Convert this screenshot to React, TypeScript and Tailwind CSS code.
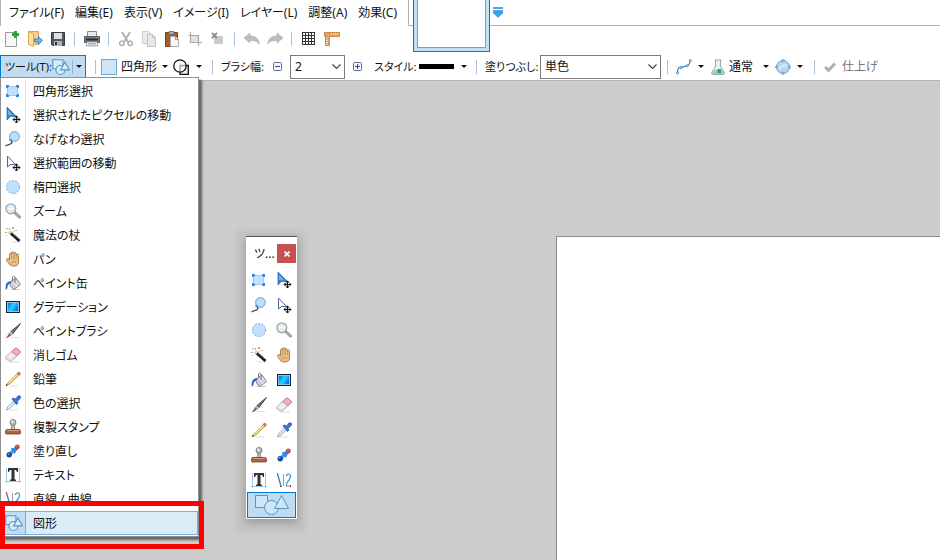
import type { ReactNode } from 'react'

type IconProps = { className?: string }

function Svg({ children, className = 'size-4' }: IconProps & { children: ReactNode }) {
  return (
    <svg viewBox="0 0 16 16" fill="none" className={`block shrink-0 ${className}`} aria-hidden="true">
      {children}
    </svg>
  )
}

/* ---------- tool icons ---------- */

function RectSelectIcon() {
  return (
    <Svg>
      <rect x="2.500" y="3.500" width="10" height="9" fill="#bfe0ff" stroke="#6c9cc6" strokeDasharray="1 1" />
      <path d="M1 2h3v2H3v1H1zM14 2h-3v2h1v1h2zM1 14h3v-2H3v-1H1zM14 14h-3v-2h1v-1h2z" fill="#2f86ee" />
    </Svg>
  )
}

function MovePixelsIcon() {
  return (
    <Svg>
      <path d="M2 0V13L5.500 9.500H11.500Z" fill="#3f7fc4" stroke="#2c62a4" strokeWidth="0.700" />
      <path d="M3 2.500V8L8 8.500Z" fill="#74abe2" />
      <MoveCross />
    </Svg>
  )
}

function MoveSelectionIcon() {
  return (
    <Svg>
      <path d="M2.500 1V12L5.500 9.500H10.500Z" fill="#fff" stroke="#51689b" />
      <MoveCross />
    </Svg>
  )
}

function MoveCross() {
  return (
    <>
      <path d="M11.500 9v7M8 12.500h7" stroke="#111" strokeWidth="1.200" />
      <path d="M11.500 8.500l2 2h-4zM11.500 16.500l2-2h-4zM7.500 12.500l2-2v4zM15.500 12.500l-2-2v4z" fill="#111" />
    </>
  )
}

function LassoIcon() {
  return (
    <Svg>
      <circle cx="9.500" cy="5.500" r="4.900" fill="#bcdfff" stroke="#719fcb" />
      <path d="M5.500 9.500c2 1 2 2.500 0 3.500-1.500.8-3 .7-5 2" stroke="#30455c" strokeWidth="1.300" />
      <circle cx="5.500" cy="9" r="1.300" fill="#5b8ec5" />
    </Svg>
  )
}

function EllipseSelectIcon() {
  return (
    <Svg>
      <circle cx="8" cy="8" r="6.500" fill="#bfe0ff" stroke="#6ea6da" strokeDasharray="2 1.200" />
    </Svg>
  )
}

function ZoomIcon() {
  return (
    <Svg>
      <path d="M9.500 9.500l5 4.500" stroke="#8c8c8c" strokeWidth="3" strokeLinecap="round" />
      <path d="M10.500 10.500l4 3.500" stroke="#d3d3d3" strokeLinecap="round" />
      <circle cx="5.800" cy="5.800" r="4.900" fill="#dcebf4" stroke="#a9a9a9" strokeWidth="1.400" />
      <path d="M3 5.500h6" stroke="#fff" strokeWidth="2" />
    </Svg>
  )
}

function WandIcon() {
  return (
    <Svg>
      <path d="M6 15h9" stroke="#ddd" />
      <path d="M4.500 5l10 9" stroke="#1a1a1a" strokeWidth="3" />
      <path d="M4 4.500L6 6.300" stroke="#ddd" strokeWidth="2.500" />
      <path d="M7 6l7 6" stroke="#777" strokeWidth="0.800" />
      <path d="M1 1h2v1H1zM7 0h2v2H7zM10 3h2v1h-2zM0 5h2v1H0zM4 1h1v2H4zM8 4h1v1H8zM1 8h1v1H1z" fill="#c9ad4e" />
    </Svg>
  )
}

function HandIcon() {
  return (
    <Svg>
      <path
        d="M4.500 9V3.500Q4.500 2 5.500 2T6.500 3V2Q6.500 .8 7.700 .8T9 2v1Q9 1.500 10 1.500T11.300 3v1.500Q11.500 3 12.500 3T13.500 4.500V11q0 4-4.500 4H7.500q-2.500 0-4-3L1.500 9.500Q1 8 2.500 7.500T4.500 9Z"
        fill="#e9bd88"
        stroke="#b57e45"
      />
      <path d="M6.600 3v5M9 3v5M11.300 4v4M6 12q2-2 5-1" stroke="#c08b54" strokeWidth="0.800" />
    </Svg>
  )
}

function BucketIcon() {
  return (
    <Svg>
      <path d="M6 14.500h9" stroke="#ccc" />
      <path d="M4.500 7.500L11 3l4.500 6.500L9 14.500Q5 12.500 4.500 7.500Z" fill="#cfcfd4" stroke="#85858c" />
      <path d="M8 7l4.500 5M10.500 5l3.500 4.500" stroke="#f5f5f5" />
      <path d="M7.500 6V2q1-2 2.500 0v6" stroke="#777" />
      <path d="M6.500 6Q1.500 6.500 1 9.500T.5 14.500q2 0 2-2.500T6 8Z" fill="#2769c8" />
    </Svg>
  )
}

function GradientIcon() {
  return (
    <Svg>
      <defs>
        <linearGradient id="sea" x1="0" y1="0" x2="1" y2="0.500">
          <stop offset="0" stopColor="#0759df" />
          <stop offset="0.550" stopColor="#24d6ff" />
          <stop offset="1" stopColor="#0773ef" />
        </linearGradient>
      </defs>
      <rect x="1" y="2" width="14" height="12" fill="#10213f" />
      <rect x="2.500" y="3.500" width="11" height="9" fill="url(#sea)" stroke="#8fc4ee" />
    </Svg>
  )
}

function BrushIcon() {
  return (
    <Svg>
      <path d="M6 14.500h8" stroke="#ddd" />
      <path d="M15.500 .5L6 8.500l2 2Z" fill="#777" stroke="#444" />
      <path d="M6 8.500l2 2-2 2-2-2z" fill="#b8b8b8" stroke="#777" strokeWidth="0.600" />
      <path d="M4 10.500l2 1.800Q4 15 .5 15.500 2.500 13 4 10.500Z" fill="#97623a" />
    </Svg>
  )
}

function EraserIcon() {
  return (
    <Svg>
      <path d="M5 15h9" stroke="#ddd" />
      <path d="M1 9.500L10 1.500q1-.8 2 0l3 2.500q1 1 0 2L6.500 14q-1 1-2 .3L1 12q-1-1 0-2.500Z" fill="#f0f0f0" stroke="#b4b4b4" />
      <path d="M6.500 4.700L10 1.500q1-.8 2 0l3 2.500q1 1 0 2l-3 2.800Z" fill="#f4aeb8" stroke="#d48391" />
      <path d="M1.500 10l4 3.500L11 9" stroke="#c9c9c9" />
    </Svg>
  )
}

function PencilIcon() {
  return (
    <Svg>
      <path d="M5 15h8" stroke="#ddd" />
      <path d="M3 11.800L12.300 2.500l1.700 1.700-9.500 9-3.500 1.300Z" fill="#f6d566" stroke="#ad8b35" strokeWidth="0.800" />
      <path d="M4 11.500l8.500-8" stroke="#fff0a5" />
      <path d="M12 2.500L13.500 1q1.500 0 2 2L14 4.500z" fill="#e0717b" stroke="#b9525c" strokeWidth="0.600" />
      <path d="M.8 15l.8-2 1.200 1.200z" fill="#333" />
    </Svg>
  )
}

function PickerIcon() {
  return (
    <Svg>
      <path d="M4 15h9" stroke="#ddd" />
      <path d="M9 5.500l2 2-6.500 6-3 1.500 1-3Z" fill="#e4edf7" stroke="#8296ae" strokeWidth="0.800" />
      <path d="M7 4l1.500-1 2 1L13 1q1.500-.8 2.300.3T14.800 4L12 6.500l1 1.500-1.500 1.500z" fill="#3d73d7" stroke="#2449a1" strokeWidth="0.700" />
    </Svg>
  )
}

function StampIcon() {
  return (
    <Svg>
      <path d="M7 6h2l1 5H6z" fill="#bbb" stroke="#777" strokeWidth="0.700" />
      <circle cx="8" cy="3.500" r="3" fill="#b8b8b8" stroke="#808080" />
      <circle cx="7.300" cy="2.800" r="1.200" fill="#eee" />
      <path d="M2 10.500h12q1.500 0 1.500 2V14q0 1-1 1h-13q-1 0-1-1v-1.500q0-2 1.500-2Z" fill="#a8653e" stroke="#7b3f20" strokeWidth="0.800" />
      <path d="M2 11.500h12" stroke="#d59a75" />
    </Svg>
  )
}

function RecolorIcon() {
  return (
    <Svg>
      <path d="M5 11l6-6" stroke="#4da1ec" strokeWidth="3.500" />
      <circle cx="12.300" cy="4" r="2.400" fill="#b8423e" />
      <circle cx="4.200" cy="11.700" r="2.700" fill="#1746a6" />
      <path d="M6 5l1 3 3 3 1-3 2-1-3-2z" fill="#2c8be2" />
      <circle cx="3.500" cy="11" r="1" fill="#6b94e5" />
      <circle cx="12" cy="3.300" r=".8" fill="#f09a94" />
    </Svg>
  )
}

function TextIcon() {
  return (
    <Svg>
      <path d="M1.500 1v15M14.500 1v15M0 14.500h16" stroke="#a3c5ee" />
      <path d="M3 1h10v4h-1l-1-2H9.500v9l1.500 1v1H5v-1l1.500-1V3H5L4 5H3z" fill="#333" />
    </Svg>
  )
}

function LineIcon() {
  return (
    <Svg>
      <path d="M1.500 2l3.500 12" stroke="#2d83c9" strokeWidth="1.300" />
      <path d="M7.500 2v12" stroke="#999" />
      <path d="M10.500 4Q11 1.500 13 2t1.500 3q-.5 2-3 5-1.500 2-1 4h4.500" stroke="#4298d5" strokeWidth="1.200" />
      <path d="M1 1h1v1H1zM4 14h2v1H4zM10 3h1v1h-1zM14 13h1v2h-1z" fill="#d32222" />
    </Svg>
  )
}

function ShapesIcon() {
  return (
    <Svg className="size-[18px]">
      <path d="M.7 1.500h9v8h-9z" fill="#d8ebf8" stroke="#5795c4" />
      <circle cx="7.500" cy="10.700" r="4" fill="#d8ebf8" stroke="#5795c4" />
      <path d="M11.500 3.500L15.400 10.500H7.700Z" fill="#d8ebf8" stroke="#5795c4" />
    </Svg>
  )
}

function WideShapesIcon() {
  return (
    <svg viewBox="0 0 36 22" fill="#cfe6f7" stroke="#5795c4" className="h-[22px] w-9" aria-hidden="true">
      <path d="M1.500 1.500h12v12h-12z" />
      <circle cx="17.500" cy="13.500" r="7" />
      <path d="M27.500 1.500L34.500 14.500H20.500Z" />
    </svg>
  )
}

/* ---------- toolbar icons ---------- */

function NewIcon() {
  return (
    <Svg>
      <path d="M1.500 1.500h11v14h-11z" fill="#f7f7f7" stroke="#9c9c9c" />
      <path d="M10 0h3v2h2v3h-2v2h-3V5H8V2h2z" fill="#2ba345" />
    </Svg>
  )
}

function OpenIcon() {
  return (
    <Svg>
      <path d="M1.500 .5h10v13h-10z" fill="#f4cf88" stroke="#d8a34f" />
      <path d="M1.500 .5l5 2.500v12.500l-5-2z" fill="#ffe0a0" stroke="#dca850" />
      <path d="M7.500 8h4V5.500l4 4-4 4V11h-4z" fill="#73b3e8" stroke="#397fbd" strokeWidth="0.800" />
    </Svg>
  )
}

function SaveIcon() {
  return (
    <Svg>
      <path d="M1.500 1.500h13v13h-12l-1-1z" fill="#555961" stroke="#393b40" />
      <path d="M4 2h8v6H4z" fill="#dde1e6" />
      <path d="M4 10h8v5H4z" fill="#aeb4bb" />
      <path d="M5 11h2v3H5z" fill="#333" />
    </Svg>
  )
}

function PrintIcon() {
  return (
    <Svg>
      <path d="M3.500 .5h9v6h-9z" fill="#e8e8e8" stroke="#8b8b8b" />
      <path d="M.5 5.500h15v6H.5z" fill="#777b81" stroke="#55585d" />
      <path d="M2 8.500h12" stroke="#2b2d31" strokeWidth="2" />
      <path d="M3 11h10l1 4H2z" fill="#eef1f3" stroke="#949494" strokeWidth="0.700" />
      <path d="M4 12.500h8M4 14h8" stroke="#7aa2bf" strokeWidth="0.700" />
      <path d="M13 6h1v1h-1z" fill="#6cd061" />
    </Svg>
  )
}

function CutIcon() {
  return (
    <Svg>
      <path d="M4 1l6 10M12 1L6 11" stroke="#b4b4b4" strokeWidth="2" />
      <circle cx="3.800" cy="12.300" r="2.200" stroke="#aaa" strokeWidth="1.400" />
      <circle cx="12.200" cy="12.300" r="2.200" stroke="#aaa" strokeWidth="1.400" />
    </Svg>
  )
}

function CopyIcon() {
  return (
    <Svg>
      <path d="M1.500 .5h6l2 2v10h-8z" fill="#ececec" stroke="#cbcbcb" />
      <path d="M6.500 3.500h5l3 3v9h-8z" fill="#e8e8e8" stroke="#c2c2c2" />
      <path d="M11.500 3.500v3h3" stroke="#c2c2c2" />
    </Svg>
  )
}

function PasteIcon() {
  return (
    <Svg>
      <path d="M1.500 1.500h12v14h-12z" fill="#a75a2b" stroke="#7b3c17" />
      <path d="M5 .5h5v3H5z" fill="#ababab" stroke="#666" strokeWidth="0.800" />
      <path d="M6.500 5.500h5l3 3v7h-8z" fill="#f7f7f7" stroke="#aaa" />
      <path d="M11.500 5.500v3h3" stroke="#999" />
    </Svg>
  )
}

function CropIcon() {
  return (
    <Svg>
      <path d="M4 5h7v6H4z" fill="#e2e2e2" />
      <path d="M3.500 1v10.500H15M1 4.500h10.500V15" stroke="#aaa" strokeWidth="1.200" />
    </Svg>
  )
}

function DeselectIcon() {
  return (
    <Svg>
      <rect x="4.500" y="5.500" width="8" height="7" fill="#ccc" stroke="#aaa" strokeDasharray="1 1" />
      <path d="M2 2l5 5M7 2L2 7" stroke="#8f8f8f" strokeWidth="1.800" />
    </Svg>
  )
}

function UndoIcon({ className = 'size-4' }: IconProps) {
  return (
    <Svg className={className}>
      <path d="M0 7l6-5v3q8-.5 9.500 8-3-4-9.500-3.500V12Z" fill="#bdbdbd" stroke="#adadad" strokeWidth="0.600" />
    </Svg>
  )
}

function GridIcon() {
  return (
    <Svg>
      <path d="M1.500 1v13M4.500 1v13M7.500 1v13M10.500 1v13M13.500 1v13M1 1.500h13M1 4.500h13M1 7.500h13M1 10.500h13M1 13.500h13" stroke="#333" />
    </Svg>
  )
}

function RulerIcon() {
  return (
    <Svg>
      <path d="M.5 1.500h15v4H5.500v9h-4v-9h-1z" fill="#e0a264" stroke="#c98a50" />
      <path d="M7.500 2v2M9.500 2v2M11.500 2v2M13.500 2v2M2 7.500h2M2 9.500h2M2 11.500h2M2 13.500h2" stroke="#f5d5ac" />
    </Svg>
  )
}

function OutlineIcon() {
  return (
    <Svg>
      <path d="M7 6.500h8.300v8.800H7z" fill="#eee" stroke="#111" strokeWidth="1.300" />
      <circle cx="7" cy="7" r="6.200" fill="#fff" fillOpacity="0.600" stroke="#111" strokeWidth="1.300" />
    </Svg>
  )
}

function SplineIcon() {
  return (
    <Svg>
      <path d="M1.500 14C1.500 6 5 9 9 7.500S14 5 14 2" stroke="#3c7fc2" strokeWidth="1.200" />
      <g fill="#d7ecff" stroke="#3c7fc2" strokeWidth="0.800">
        <circle cx="1.500" cy="14" r="1.100" />
        <circle cx="5" cy="8.800" r="1.100" />
        <circle cx="11" cy="6.800" r="1.100" />
        <circle cx="14.200" cy="1.700" r="1.100" />
      </g>
    </Svg>
  )
}

function FlaskIcon() {
  return (
    <Svg>
      <path d="M5.500 1v6L1.800 13.500q-.5 2 1 2h10.500q1.500 0 1-2L10.500 7V1" fill="#e4f0f8" stroke="#8eaabd" />
      <path d="M4 11h8l2 3q0 1-1 1H3q-1 0-.5-1z" fill="#94d3ae" />
      <path d="M7.500 10h3.500v4H7.500z" fill="#2fa260" />
      <path d="M4.500 1h7" stroke="#8eaabd" />
    </Svg>
  )
}

function SelectionQualityIcon() {
  return (
    <Svg>
      <circle cx="8" cy="8" r="6.500" fill="#b5d6f0" stroke="#6b9fd0" />
      <path d="M4 10q4-5 8-3" stroke="#cfe6f8" strokeWidth="3" />
      <g fill="#e5f3ff" stroke="#3c7fc2" strokeWidth="0.800">
        <circle cx="8" cy="1.500" r="1" />
        <circle cx="8" cy="14.500" r="1" />
        <circle cx="1.500" cy="8" r="1" />
        <circle cx="14.500" cy="8" r="1" />
      </g>
    </Svg>
  )
}

function CheckIcon() {
  return (
    <Svg className="size-3">
      <path d="M1.500 8l4.500 4.500L14.500 3.500" stroke="#b1b1b1" strokeWidth="4" />
    </Svg>
  )
}

function Arrow() {
  return (
    <svg viewBox="0 0 6 3" className="block h-[3px] w-1.5 shrink-0" aria-hidden="true">
      <path d="M0 0h6L3 3z" fill="#111" />
    </svg>
  )
}

function Chevron() {
  return (
    <svg viewBox="0 0 9 6" fill="none" className="pointer-events-none absolute top-[9px] right-1 h-1.5 w-[9px]" aria-hidden="true">
      <path d="M.5 .5l4 4 4-4" stroke="#444" strokeWidth="1.200" />
    </svg>
  )
}

/* ---------- data ---------- */

const menus = ['ファイル(F)', '編集(E)', '表示(V)', 'イメージ(I)', 'レイヤー(L)', '調整(A)', '効果(C)']

const tools = [
  { name: '四角形選択', Icon: RectSelectIcon },
  { name: '選択されたピクセルの移動', Icon: MovePixelsIcon },
  { name: 'なげなわ選択', Icon: LassoIcon },
  { name: '選択範囲の移動', Icon: MoveSelectionIcon },
  { name: '楕円選択', Icon: EllipseSelectIcon },
  { name: 'ズーム', Icon: ZoomIcon },
  { name: '魔法の杖', Icon: WandIcon },
  { name: 'パン', Icon: HandIcon },
  { name: 'ペイント缶', Icon: BucketIcon },
  { name: 'グラデーション', Icon: GradientIcon },
  { name: 'ペイントブラシ', Icon: BrushIcon },
  { name: '消しゴム', Icon: EraserIcon },
  { name: '鉛筆', Icon: PencilIcon },
  { name: '色の選択', Icon: PickerIcon },
  { name: '複製スタンプ', Icon: StampIcon },
  { name: '塗り直し', Icon: RecolorIcon },
  { name: 'テキスト', Icon: TextIcon },
  { name: '直線 / 曲線', Icon: LineIcon },
]

const actions = [
  [
    { name: '新規', icon: <NewIcon /> },
    { name: '開く', icon: <OpenIcon /> },
    { name: '保存', icon: <SaveIcon /> },
  ],
  [{ name: '印刷', icon: <PrintIcon /> }],
  [
    { name: '切り取り', icon: <CutIcon /> },
    { name: 'コピー', icon: <CopyIcon /> },
    { name: '貼り付け', icon: <PasteIcon /> },
    { name: 'トリミング', icon: <CropIcon /> },
    { name: '選択の解除', icon: <DeselectIcon /> },
  ],
  [
    { name: '元に戻す', icon: <UndoIcon /> },
    { name: 'やり直し', icon: <UndoIcon className="size-4 -scale-x-100" /> },
  ],
  [
    { name: 'グリッド', icon: <GridIcon /> },
    { name: 'ルーラー', icon: <RulerIcon /> },
  ],
]

/* ---------- layout ---------- */

function MenuBar() {
  return (
    <div className="flex h-[26px]">
      <nav className="flex w-[409px] shrink-0 items-center gap-[11px] border-x border-[#b4b4b4] pl-2">
        {menus.map(menu => (
          <button key={menu} type="button" className="whitespace-nowrap">
            {menu}
          </button>
        ))}
      </nav>
      <div className="relative flex flex-1 items-center border-b border-[#b4b4b4] pl-[83px]">
        <button
          type="button"
          aria-label="画像 1"
          className="absolute top-0 left-1 h-[52px] w-[77px] border-x border-b border-[#0078d7] bg-[#c2e0f6] px-[3px] pb-[3px]"
        >
          <span className="block size-full border-x border-b border-[#999] bg-white" />
        </button>
        <button type="button" aria-label="画像の一覧">
          <svg viewBox="0 0 12 11" className="h-[11px] w-3" aria-hidden="true">
            <path d="M1 1h10M1 4h10" stroke="#4fa5ea" strokeWidth="2" />
            <path d="M1 5.500h10L6 10.300z" fill="#1fb2f8" stroke="#1f6fc5" strokeWidth="0.700" />
          </svg>
        </button>
      </div>
    </div>
  )
}

function Divider() {
  return (
    <span className="flex w-[11px] shrink-0 justify-center">
      <span className="h-3.5 w-px bg-[#a9c0d8]" />
    </span>
  )
}

function ActionBar() {
  return (
    <div className="flex h-[27px] items-center pb-px">
      {actions.map((group, i) => (
        <div key={i} className="flex items-center">
          {i > 0 && <Divider />}
          {group.map(({ name, icon }) => (
            <button key={name} type="button" aria-label={name} className="flex w-[23px] justify-center">
              {icon}
            </button>
          ))}
        </div>
      ))}
    </div>
  )
}

function StepButton({ name, plus = false }: { name: string; plus?: boolean }) {
  return (
    <button type="button" aria-label={name}>
      <svg viewBox="0 0 9 9" fill="none" className="size-[9px]" aria-hidden="true">
        <rect x=".5" y=".5" width="8" height="8" rx="1" fill="#f4f6fb" stroke="#5b6b92" />
        <path d={plus ? 'M2 4.500h5M4.500 2v5' : 'M2 4.500h5'} stroke="#2c4b9b" />
      </svg>
    </button>
  )
}

function OptionBar() {
  return (
    <div className="flex h-7 items-center border-b border-[#b4b4b4] whitespace-nowrap">
      <div className="flex w-[90px] shrink-0">
        <button type="button" className="flex h-[23px] w-[86px] items-center border border-[#0078d7] bg-[#c0dcf3] pl-1">
          <span className="w-[47px] text-left text-[11px]">ツール(T):</span>
          <ShapesIcon />
          <span className="ml-0.5 h-3.5 w-px bg-[#8fb3d6]" />
          <span className="ml-[3px]"><Arrow /></span>
        </button>
      </div>
      <Divider />
      <div className="flex w-[106px] shrink-0 items-center gap-[5px]">
        <button type="button" className="flex items-center gap-1">
          <span className="size-4 border border-[#6fa8d6] bg-[#cfe5f5]" />
          四角形
          <span className="pl-px"><Arrow /></span>
        </button>
        <button type="button" aria-label="図形の描画タイプ" className="flex items-center gap-[7px]">
          <OutlineIcon />
          <Arrow />
        </button>
      </div>
      <Divider />
      <div className="flex w-[253px] shrink-0 items-center pl-[3px]">
        <label htmlFor="brush-width" className="w-[52px] text-[11px]">ブラシ幅:</label>
        <StepButton name="ブラシ幅を減らす" />
        <span className="relative mx-2 w-[55px]">
          <select id="brush-width" className="block h-6 w-full appearance-none border border-[#7a7a7a] bg-white pl-1">
            <option>2</option>
          </select>
          <Chevron />
        </span>
        <StepButton name="ブラシ幅を増やす" plus />
        <button type="button" className="ml-3 flex items-center gap-[7px]">
          <span className="w-[38px] text-left text-[11px]">スタイル:</span>
          <span className="h-[5px] w-[35px] bg-black" />
          <Arrow />
        </button>
      </div>
      <Divider />
      <div className="flex w-[180px] shrink-0 items-center pl-[3px]">
        <label htmlFor="fill" className="w-[55px] text-[11px]">塗りつぶし:</label>
        <span className="relative w-[121px]">
          <select id="fill" className="block h-6 w-full appearance-none border border-[#7a7a7a] bg-white pl-1">
            <option>単色</option>
          </select>
          <Chevron />
        </span>
      </div>
      <Divider />
      <div className="flex w-[136px] shrink-0 items-center gap-1.5 pl-[3px]">
        <button type="button" aria-label="アンチエイリアス" className="flex items-center gap-1.5">
          <SplineIcon />
          <Arrow />
        </button>
        <button type="button" className="flex items-center gap-[3px]">
          <FlaskIcon />
          通常
          <span className="pl-[7px]"><Arrow /></span>
        </button>
        <button type="button" aria-label="選択範囲の品質" className="flex items-center gap-1.5">
          <SelectionQualityIcon />
          <Arrow />
        </button>
      </div>
      <Divider />
      <button type="button" disabled className="flex items-center gap-1.5 pl-1 text-[#757575]">
        <CheckIcon />
        仕上げ
      </button>
    </div>
  )
}

function ToolMenu() {
  return (
    <div className="absolute top-[77px] left-0 w-[199px] border border-[#8f8f8f] bg-white py-px shadow-[3px_3px_2px_rgba(0,0,0,0.5)]">
      {tools.map(({ name, Icon }) => (
        <button key={name} type="button" className="flex h-6 w-full items-center text-left">
          <span className="flex h-full w-[25px] items-center justify-center border-r border-[#dbe3e6]">
            <Icon />
          </span>
          <span className="pt-0.5 pl-[7px]">{name}</span>
        </button>
      ))}
      <button type="button" className="flex h-6 w-[197px] items-center border border-[#78aee5] bg-[#dcecf6] text-left">
        <span className="flex h-full w-6 items-center justify-center border-r border-[#78aee5] bg-[#c0dcf3]">
          <ShapesIcon />
        </span>
        <span className="pt-0.5 pl-[7px]">図形</span>
      </button>
    </div>
  )
}

function ToolWindow() {
  return (
    <section className="absolute top-[236px] left-[246px] w-[51px] border-t border-[#555] bg-white pb-px shadow-[0_3px_8px_rgba(0,0,0,0.22),0_3px_6px_9px_rgba(0,0,0,0.05)]">
      <header className="flex items-center justify-between pt-[7px] pr-px pb-1 pl-2">
        <span className="w-5 whitespace-nowrap">ツ...</span>
        <button type="button" aria-label="閉じる" className="flex h-[19px] w-[19px] items-center justify-center bg-[#c75050]">
          <svg viewBox="0 0 6 6" className="size-1.5" aria-hidden="true">
            <path d="M.5 .5l5 5M5.500 .5l-5 5" stroke="#fff" strokeWidth="1.600" />
          </svg>
        </button>
      </header>
      <div className="grid grid-cols-2">
        {tools.map(({ name, Icon }) => (
          <button key={name} type="button" aria-label={name} className="flex h-[25px] items-center justify-center">
            <Icon />
          </button>
        ))}
      </div>
      <button
        type="button"
        aria-label="図形"
        className="mx-px flex h-[26px] w-[49px] items-center justify-center border border-[#0078d7] bg-[#c0dcf3]"
      >
        <WideShapesIcon />
      </button>
    </section>
  )
}

export default function App() {
  return (
    <div className="relative flex min-h-screen flex-col overflow-hidden bg-[#cccccc] font-['Noto_Sans','Noto_Sans_CJK_JP',sans-serif] text-[12px] leading-4 text-[#111] [font-feature-settings:'palt']">
      <header className="bg-white">
        <MenuBar />
        <ActionBar />
        <OptionBar />
      </header>
      <main className="flex flex-1 pt-[155px] pl-[556px]">
        <div className="flex-1 border-t border-l border-[#8c8c8c] bg-white" />
      </main>
      <ToolMenu />
      <ToolWindow />
      <div className="pointer-events-none absolute top-[501px] left-0 h-12 w-[204px] border-[5px] border-[#fe0000]" />
    </div>
  )
}
